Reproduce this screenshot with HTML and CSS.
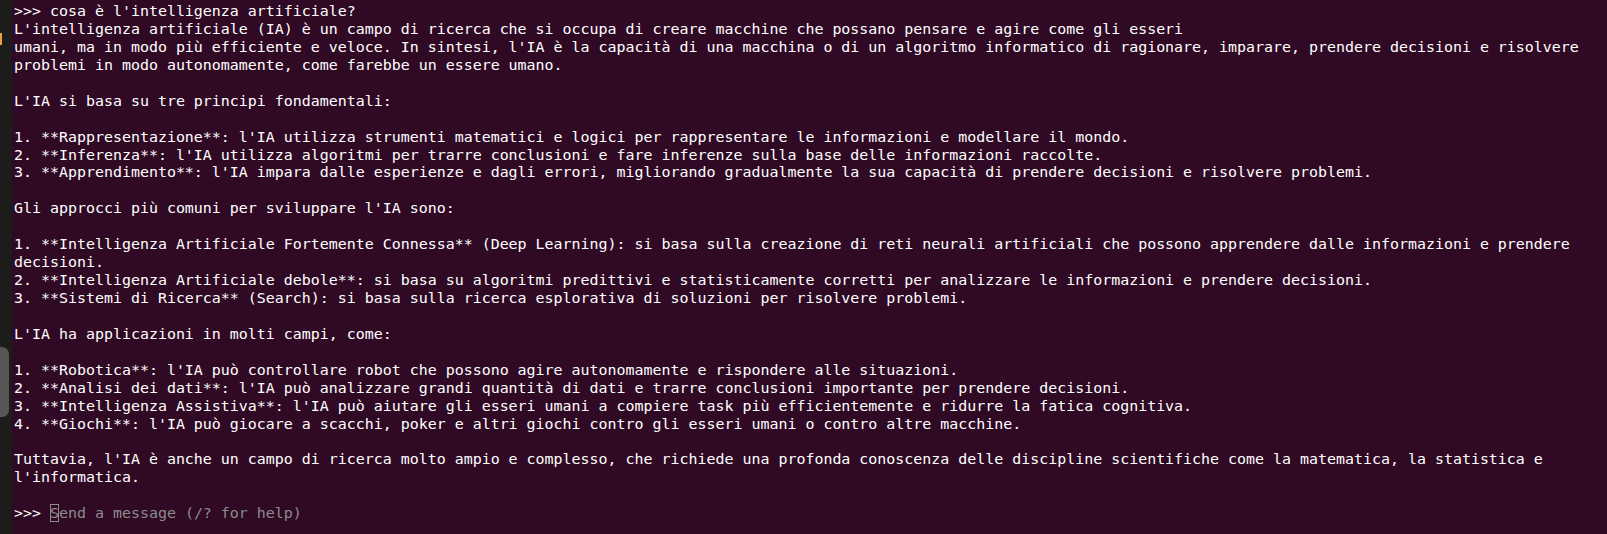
FILE: index.html
```html
<!DOCTYPE html>
<html>
<head>
<meta charset="utf-8">
<link rel="stylesheet" href="styles.css">
</head>
<body>
<div class="screen">
  <div class="dock">
    <div class="dock-active"></div>
    <div class="dock-item"></div>
  </div>
  <div class="term">
<pre class="out">&gt;&gt;&gt; cosa è l'intelligenza artificiale?
L'intelligenza artificiale (IA) è un campo di ricerca che si occupa di creare macchine che possano pensare e agire come gli esseri
umani, ma in modo più efficiente e veloce. In sintesi, l'IA è la capacità di una macchina o di un algoritmo informatico di ragionare, imparare, prendere decisioni e risolvere
problemi in modo autonomamente, come farebbe un essere umano.

L'IA si basa su tre principi fondamentali:

1. **Rappresentazione**: l'IA utilizza strumenti matematici e logici per rappresentare le informazioni e modellare il mondo.
2. **Inferenza**: l'IA utilizza algoritmi per trarre conclusioni e fare inferenze sulla base delle informazioni raccolte.
3. **Apprendimento**: l'IA impara dalle esperienze e dagli errori, migliorando gradualmente la sua capacità di prendere decisioni e risolvere problemi.

Gli approcci più comuni per sviluppare l'IA sono:

1. **Intelligenza Artificiale Fortemente Connessa** (Deep Learning): si basa sulla creazione di reti neurali artificiali che possono apprendere dalle informazioni e prendere
decisioni.
2. **Intelligenza Artificiale debole**: si basa su algoritmi predittivi e statisticamente corretti per analizzare le informazioni e prendere decisioni.
3. **Sistemi di Ricerca** (Search): si basa sulla ricerca esplorativa di soluzioni per risolvere problemi.

L'IA ha applicazioni in molti campi, come:

1. **Robotica**: l'IA può controllare robot che possono agire autonomamente e rispondere alle situazioni.
2. **Analisi dei dati**: l'IA può analizzare grandi quantità di dati e trarre conclusioni importante per prendere decisioni.
3. **Intelligenza Assistiva**: l'IA può aiutare gli esseri umani a compiere task più efficientemente e ridurre la fatica cognitiva.
4. **Giochi**: l'IA può giocare a scacchi, poker e altri giochi contro gli esseri umani o contro altre macchine.

Tuttavia, l'IA è anche un campo di ricerca molto ampio e complesso, che richiede una profonda conoscenza delle discipline scientifiche come la matematica, la statistica e
l'informatica.

&gt;&gt;&gt; <span class="cursor">S</span><span class="placeholder">end a message (/? for help)</span></pre>
  </div>
</div>
</body>
</html>
```

FILE: styles.css
```css
html, body {
  margin: 0;
  padding: 0;
  background: #300a24;
}

.screen {
  display: flex;
  width: 1607px;
  height: 534px;
  overflow: hidden;
}

.dock {
  width: 12px;
  flex: none;
  background: #1c1d1a;
  padding-top: 33px;
  box-sizing: border-box;
}

.dock-active {
  width: 2px;
  height: 12px;
  background: #e8a33c;
}

.dock-item {
  width: 9px;
  height: 70px;
  margin-top: 302px;
  background: #575756;
  border-radius: 0 7px 7px 0;
}

.term {
  flex: 1;
  background: #300a24;
  padding: 3px 0 0 2px;
}

.out {
  margin: 0;
  font-family: "DejaVu Sans Mono", monospace;
  font-size: 14.95px;
  line-height: 17.93px;
  color: #ffffff;
  white-space: pre;
}

.placeholder {
  color: #8c8c8c;
}

.cursor {
  color: #8c8c8c;
  box-shadow: inset 0 0 0 1px #8c8c8c;
}
```
